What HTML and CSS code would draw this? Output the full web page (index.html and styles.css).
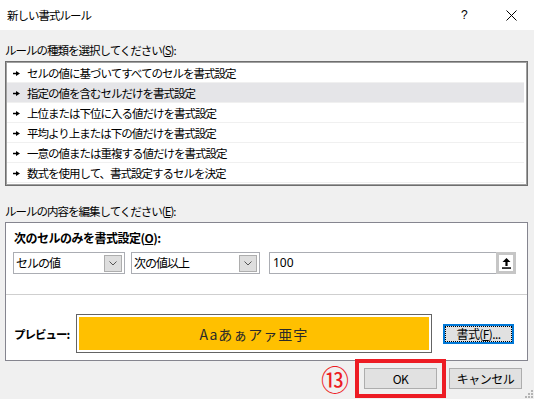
FILE: index.html
```html
<!DOCTYPE html>
<html lang="ja">
<head>
<meta charset="utf-8">
<title>新しい書式ルール</title>
<link rel="stylesheet" href="styles.css">
</head>
<body>
<div class="titlebar">
  <span class="title">新しい書式ルール</span>
  <span class="help">?</span>
  <span class="close"><svg width="11" height="11" viewBox="0 0 11 11"><path d="M0.5 0.5L10.5 10.5M10.5 0.5L0.5 10.5" stroke="#000" stroke-width="1" fill="none"/></svg></span>
</div>
<div class="content">
  <div class="label label-first">ルールの種類を選択してください(<u>S</u>):</div>
  <div class="listbox">
    <div class="item"><svg class="arrow" width="7" height="5" viewBox="0 0 7 5"><path d="M0 1.7h3.2v1.6H0z M3 0L7 2.5L3 5z" fill="#000"/></svg><span>セルの値に基づいてすべてのセルを書式設定</span></div>
    <div class="item selected"><svg class="arrow" width="7" height="5" viewBox="0 0 7 5"><path d="M0 1.7h3.2v1.6H0z M3 0L7 2.5L3 5z" fill="#000"/></svg><span>指定の値を含むセルだけを書式設定</span></div>
    <div class="item"><svg class="arrow" width="7" height="5" viewBox="0 0 7 5"><path d="M0 1.7h3.2v1.6H0z M3 0L7 2.5L3 5z" fill="#000"/></svg><span>上位または下位に入る値だけを書式設定</span></div>
    <div class="item"><svg class="arrow" width="7" height="5" viewBox="0 0 7 5"><path d="M0 1.7h3.2v1.6H0z M3 0L7 2.5L3 5z" fill="#000"/></svg><span>平均より上または下の値だけを書式設定</span></div>
    <div class="item"><svg class="arrow" width="7" height="5" viewBox="0 0 7 5"><path d="M0 1.7h3.2v1.6H0z M3 0L7 2.5L3 5z" fill="#000"/></svg><span>一意の値または重複する値だけを書式設定</span></div>
    <div class="item"><svg class="arrow" width="7" height="5" viewBox="0 0 7 5"><path d="M0 1.7h3.2v1.6H0z M3 0L7 2.5L3 5z" fill="#000"/></svg><span>数式を使用して、書式設定するセルを決定</span></div>
  </div>
  <div class="label label-second">ルールの内容を編集してください(<u>E</u>):</div>
  <div class="panel">
    <div class="panel-title">次のセルのみを書式設定(<u>O</u>):</div>
    <div class="controls">
      <div class="combo combo-1"><span class="combo-text">セルの値</span><span class="dd"><svg width="8" height="5" viewBox="0 0 8 5"><path d="M0.5 0.5L4 4L7.5 0.5" stroke="#555" stroke-width="1" fill="none"/></svg></span></div>
      <div class="combo combo-2"><span class="combo-text">次の値以上</span><span class="dd"><svg width="8" height="5" viewBox="0 0 8 5"><path d="M0.5 0.5L4 4L7.5 0.5" stroke="#555" stroke-width="1" fill="none"/></svg></span></div>
      <div class="field"><span class="field-text">100</span><span class="spin"><svg width="9" height="11" viewBox="0 0 9 11"><path d="M4.5 0L8.5 4H5.6V8H3.4V4H0.5Z" fill="#000"/><rect x="0" y="9.3" width="9" height="1.5" fill="#000"/></svg></span></div>
    </div>
    <div class="sep"></div>
    <div class="preview-row">
      <span class="plabel">プレビュー:</span>
      <div class="preview"><div class="swatch">Aaあぁアァ亜宇</div></div>
      <div class="fmt-btn"><span class="focus">書式(<u>F</u>)...</span></div>
    </div>
  </div>
  <div class="buttons">
    <span class="num">⑬</span>
    <div class="highlight"><div class="btn">OK</div></div>
    <div class="btn btn-cancel">キャンセル</div>
  </div>
</div>
<svg class="grip" width="8" height="8" viewBox="0 0 8 8"><g fill="#b4b4b4"><rect x="6" y="0" width="2" height="2"/><rect x="3" y="3" width="2" height="2"/><rect x="6" y="3" width="2" height="2"/><rect x="0" y="6" width="2" height="2"/><rect x="3" y="6" width="2" height="2"/><rect x="6" y="6" width="2" height="2"/></g></svg>
</body>
</html>
```
FILE: styles.css
```css
* { box-sizing: border-box; margin: 0; padding: 0; }
html, body { width: 534px; height: 399px; overflow: hidden; }
body {
  background: #f0f0f0;
  font-family: "Noto Sans CJK JP", "Noto Sans", sans-serif;
  font-size: 11.5px;
  letter-spacing: -1px;
  color: #000;
  position: relative;
}
u { text-decoration: underline; text-underline-offset: 1px; }

.titlebar {
  height: 30px;
  background: #fff;
  display: flex;
  align-items: center;
}
.title { flex: 1; padding-left: 7px; line-height: 16px; }
.help { font-size: 12px; line-height: 16px; width: 8px; margin-right: 37px; font-family: "Liberation Sans", sans-serif; letter-spacing: 0; }
.close { display: flex; margin-right: 17px; }

.content { padding: 0 6px 0 5px; }
.label { line-height: 16px; height: 16px; }
.label-first { margin-top: 12px; }
.label-second { margin-top: 17px; }

.listbox {
  margin-top: 3px;
  height: 125px;
  background: #fff;
  border: 1px solid #6e6e6e;
  box-shadow: inset 1px 1px 0 #a0a0a0, inset -1px -1px 0 #a0a0a0;
  padding: 1px 3px 1px 1px;
}
.item {
  height: 20px;
  display: flex;
  align-items: center;
  border-bottom: 1px solid #f0f0f0;
  padding-left: 6px;
  line-height: 16px;
}
.item.selected { background: #e5e5e8; }
.arrow { flex: none; margin-right: 7px; margin-top: 1px; }

.panel {
  margin-top: 3px;
  height: 139px;
  background: #fff;
  border: 1px solid #85858f;
  padding: 7px 10px 0 7px;
}
.panel-title {
  margin-left: 1px;
  font-size: 12px;
  font-weight: bold;
  line-height: 16px;
  height: 16px;
  letter-spacing: -0.5px;
}
.controls { display: flex; margin-top: 6px; height: 22px; }
.combo {
  display: flex;
  align-items: center;
  height: 22px;
  border: 1px solid #abadb3;
  background: #fff;
  padding-left: 2px;
}
.combo-1 { width: 112px; }
.combo-2 { width: 129px; margin-left: 6px; }
.combo-text { flex: 1; line-height: 16px; font-size: 12px; }
.dd {
  width: 18px;
  height: 17px;
  margin: 1px 2px 0 0;
  background: #dedede;
  border: 1px solid #adadad;
  display: flex;
  align-items: center;
  justify-content: center;
}
.field {
  width: 247px;
  margin-left: 9px;
  height: 22px;
  border: 1px solid #abadb3;
  border-right: none;
  display: flex;
  align-items: center;
  background: #fff;
}
.field-text { flex: 1; padding-left: 3px; font-size: 12px; line-height: 16px; letter-spacing: 0; font-family: "Noto Sans", sans-serif; }
.spin {
  width: 20px;
  height: 22px;
  margin: -1px 0;
  border: 3px solid #c6c6c6;
  background: #fff;
  display: flex;
  align-items: center;
  justify-content: center;
}
.sep { height: 1px; background: #cfcfcf; margin: 20px -10px 0 -7px; }
.preview-row { display: flex; align-items: center; margin-top: 19px; height: 39px; }
.plabel { width: 63px; flex: none; padding-left: 1px; font-weight: bold; line-height: 16px; letter-spacing: -1px; }
.preview {
  width: 356px;
  height: 39px;
  border: 1px solid #646464;
  padding: 2px;
  background: #fff;
}
.swatch {
  height: 100%;
  background: #ffc000;
  display: flex;
  align-items: center;
  justify-content: center;
  font-size: 14px;
  letter-spacing: 1px;
  color: #2a2a2a;
}
.fmt-btn {
  margin-left: 11px;
  width: 71px;
  height: 20px;
  border: 2px solid #0078d7;
  background: #e1e1e1;
  display: flex;
}
.focus {
  flex: 1;
  border: 1px dotted #000;
  display: flex;
  align-items: center;
  justify-content: center;
  line-height: 14px;
  font-size: 12px;
  letter-spacing: -0.6px;
}

.buttons {
  display: flex;
  align-items: center;
  justify-content: flex-end;
  margin-top: -2px;
  padding-right: 6px;
}
.num {
  color: #ed1c24;
  font-size: 28px;
  line-height: 30px;
  letter-spacing: 0;
  margin-right: 6px;
}
.highlight { border: 4px solid #ed1c24; padding: 5px; }
.btn {
  width: 73px;
  height: 21px;
  background: #e1e1e1;
  border: 1px solid #adadad;
  display: flex;
  align-items: center;
  justify-content: center;
  line-height: 16px;
  font-size: 12px;
  letter-spacing: -0.5px;
}
.btn-cancel { margin-left: 3px; }

.grip { position: absolute; right: 1px; bottom: 1px; }
```
